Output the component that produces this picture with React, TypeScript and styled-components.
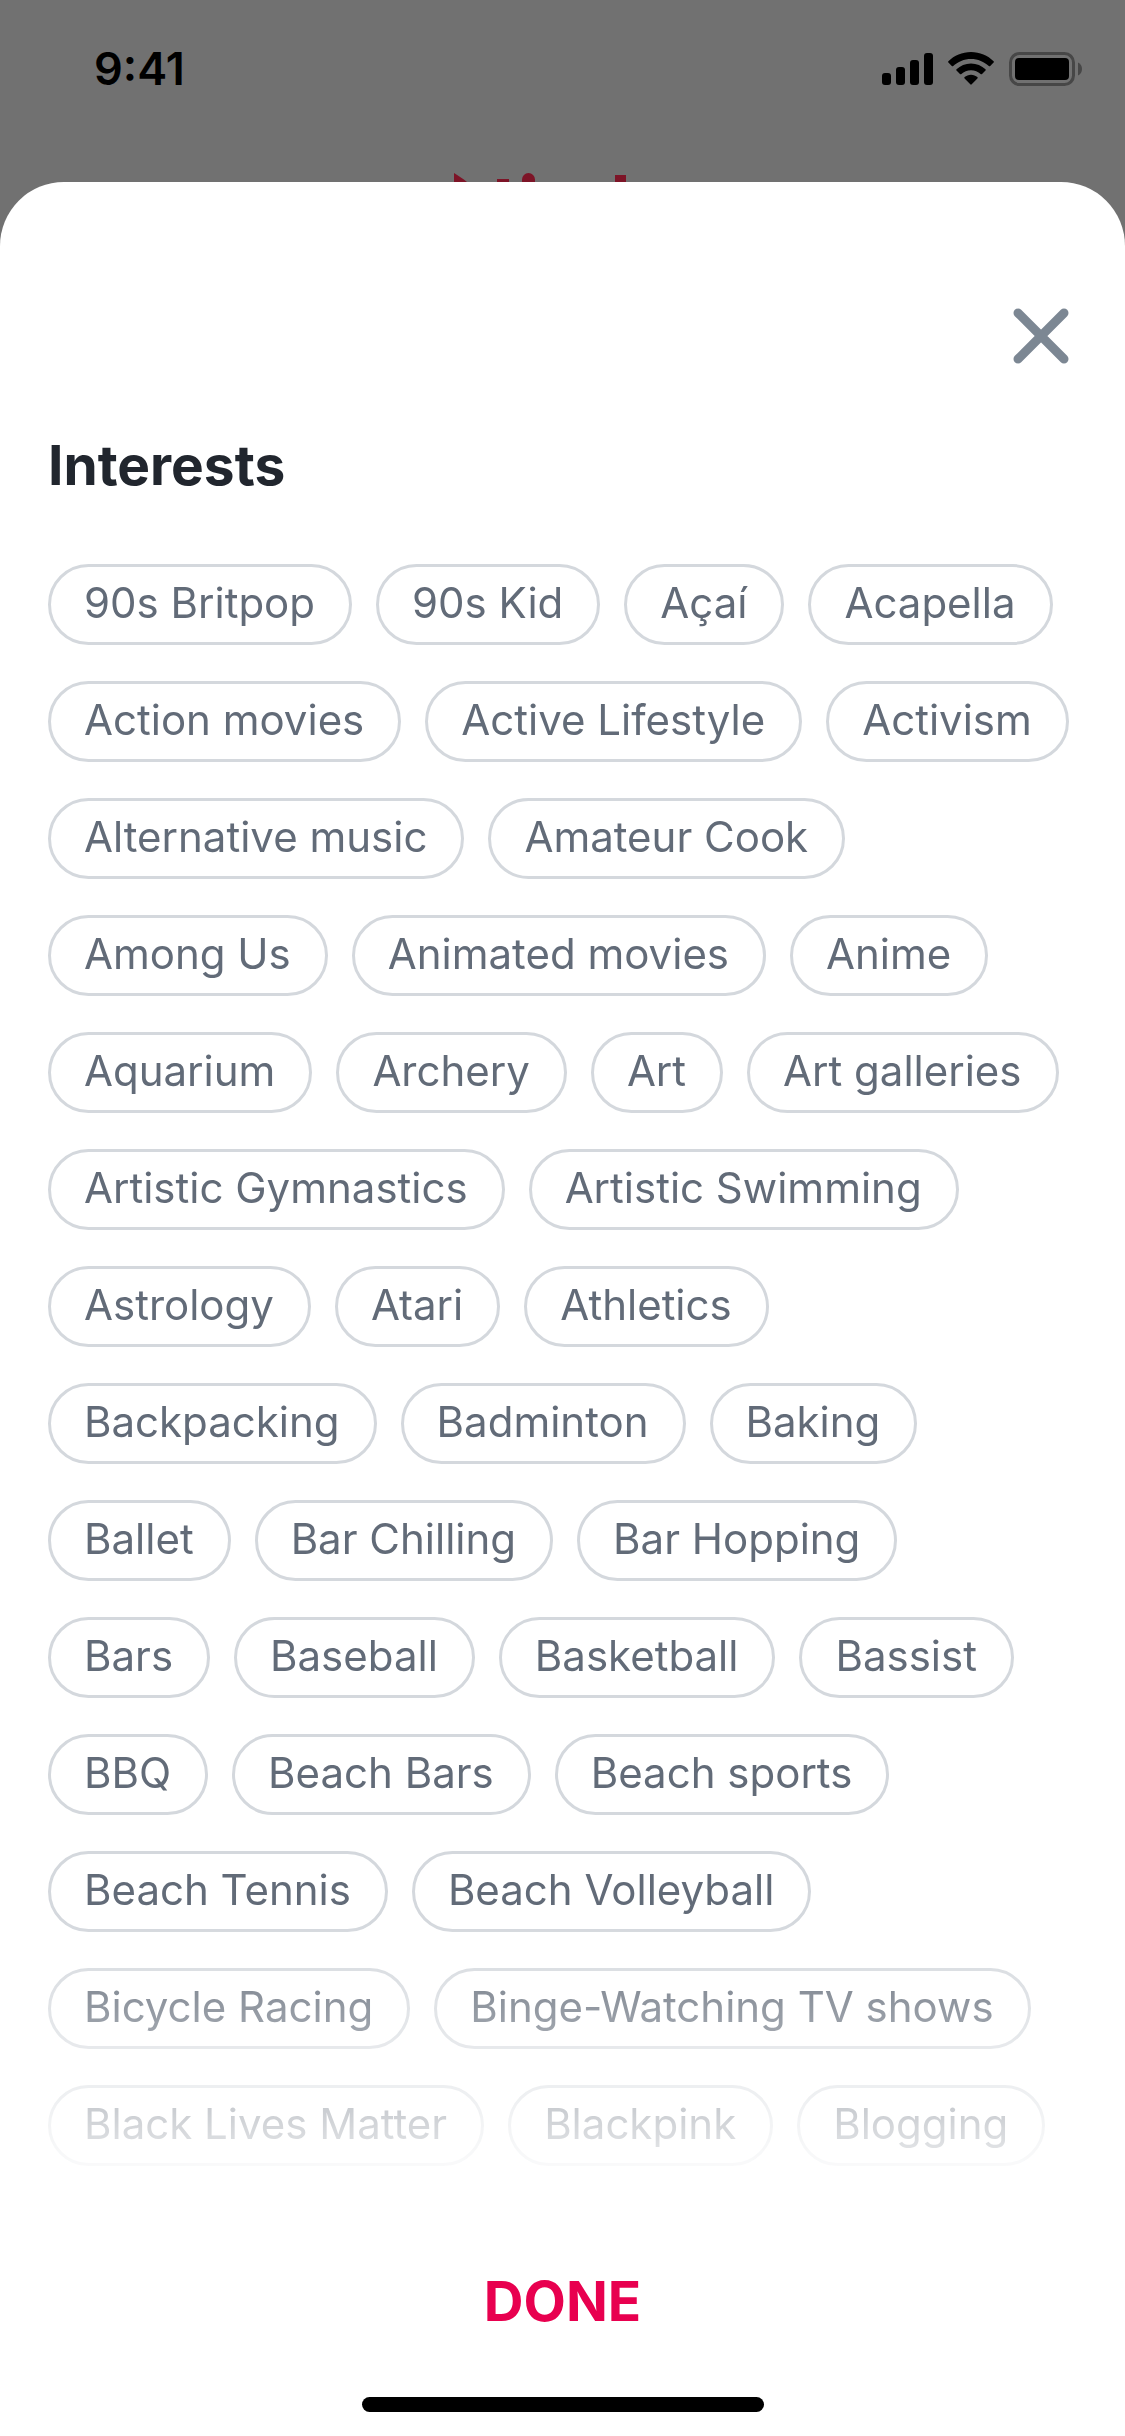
import React from "react";
import styled, { createGlobalStyle } from "styled-components";

const INTERESTS = [
  "90s Britpop",
  "90s Kid",
  "Açaí",
  "Acapella",
  "Action movies",
  "Active Lifestyle",
  "Activism",
  "Alternative music",
  "Amateur Cook",
  "Among Us",
  "Animated movies",
  "Anime",
  "Aquarium",
  "Archery",
  "Art",
  "Art galleries",
  "Artistic Gymnastics",
  "Artistic Swimming",
  "Astrology",
  "Atari",
  "Athletics",
  "Backpacking",
  "Badminton",
  "Baking",
  "Ballet",
  "Bar Chilling",
  "Bar Hopping",
  "Bars",
  "Baseball",
  "Basketball",
  "Bassist",
  "BBQ",
  "Beach Bars",
  "Beach sports",
  "Beach Tennis",
  "Beach Volleyball",
  "Bicycle Racing",
  "Binge-Watching TV shows",
  "Black Lives Matter",
  "Blackpink",
  "Blogging",
];

const GlobalStyle = createGlobalStyle`
  *, *::before, *::after {
    box-sizing: border-box;
  }

  body {
    margin: 0;
    background: #717171;
    font-family: Inter, "Liberation Sans", sans-serif;
  }
`;

const Screen = styled.div`
  display: flex;
  flex-direction: column;
  min-height: 100vh;
  background: #717171;
`;

const Backdrop = styled.header`
  display: flex;
  flex-direction: column;
`;

const StatusBar = styled.div`
  display: flex;
  align-items: center;
  justify-content: space-between;
  height: 138px;
  padding: 0 43px 0 94px;
  color: #000;
`;

const Clock = styled.time`
  font-size: 45px;
  font-weight: 600;
  line-height: 54px;
`;

const StatusIcons = styled.div`
  display: flex;
  align-items: center;
  gap: 15px;

  svg {
    display: block;
  }
`;

const BrandBar = styled.div`
  display: flex;
  align-items: flex-end;
  justify-content: center;
  height: 44px;
  color: #7d1427;

  svg {
    display: block;
  }
`;

const Sheet = styled.main`
  display: flex;
  flex: 1;
  flex-direction: column;
  padding: 126px 0 24px;
  border-radius: 64px 64px 0 0;
  background: #fff;
`;

const CloseButton = styled.button`
  display: flex;
  align-self: flex-end;
  margin: 0 56px 0 0;
  padding: 0;
  border: 0;
  background: none;
  color: #7c8793;
  cursor: pointer;
`;

const Title = styled.h1`
  margin: 68px 48px 66px;
  color: #21262e;
  font-size: 55px;
  font-weight: 700;
  line-height: 66px;
`;

const ChipList = styled.ul`
  display: flex;
  flex: 1;
  flex-wrap: wrap;
  align-content: flex-start;
  gap: 36px 24px;
  margin: 0;
  padding: 0 48px 39px;
  list-style: none;
  mask-image: linear-gradient(to bottom, #000 calc(100% - 285px), transparent);
`;

const Chip = styled.button`
  display: block;
  padding: 11px 34px 14px 33px;
  border: 3px solid #d4d8dd;
  border-radius: 41px;
  background: #fff;
  color: #626b78;
  font-family: inherit;
  font-size: 42px;
  font-weight: 400;
  line-height: 50px;
  white-space: nowrap;
  cursor: pointer;
`;

const DoneButton = styled.button`
  align-self: center;
  margin: 63px 0;
  padding: 0;
  border: 0;
  background: none;
  color: #e8004f;
  font-family: inherit;
  font-size: 55px;
  font-weight: 700;
  line-height: 66px;
  cursor: pointer;
`;

const HomeIndicator = styled.div`
  align-self: center;
  width: 402px;
  max-width: 60%;
  height: 15px;
  border-radius: 8px;
  background: #000;
`;

function SignalIcon() {
  return (
    <svg width="51" height="34" viewBox="0 0 51 34" fill="currentColor" aria-hidden="true">
      <rect x="0" y="21" width="9" height="12" rx="3" />
      <rect x="14" y="15" width="9" height="18" rx="3" />
      <rect x="28" y="8" width="9" height="25" rx="3" />
      <rect x="42" y="1" width="9" height="32" rx="3" />
    </svg>
  );
}

function WifiIcon() {
  return (
    <svg width="46" height="34" viewBox="0 0 46 34" fill="currentColor" aria-hidden="true">
      <path d="M23 0C31.800 0 39.800 3.500 45.600 9.200Q46.200 9.900 45.600 10.500L42.200 14Q41.500 14.500 40.800 14C36.200 9.600 29.900 6.900 23 6.900S9.800 9.600 5.200 14Q4.500 14.500 3.800 14L.4 10.500Q-.2 9.900 .4 9.200C6.200 3.500 14.200 0 23 0Z" />
      <path d="M23 11.400C28.600 11.400 33.700 13.600 37.500 17.200Q38.100 17.900 37.500 18.500L34 22Q33.300 22.600 32.600 22C30.100 19.700 26.700 18.300 23 18.300S15.900 19.700 13.400 22Q12.700 22.600 12 22L8.500 18.500Q7.900 17.900 8.500 17.200C12.300 13.600 17.400 11.400 23 11.400Z" />
      <path d="M23 22.700C25.500 22.700 27.700 23.600 29.400 25.100Q30.100 25.800 29.400 26.500L23.700 32.300Q23 33 22.300 32.300L16.600 26.500Q15.900 25.800 16.600 25.100C18.300 23.600 20.500 22.700 23 22.700Z" />
    </svg>
  );
}

function BatteryIcon() {
  return (
    <svg width="73" height="34" viewBox="0 0 73 34" aria-hidden="true">
      <rect x="1.500" y="1.500" width="63" height="31" rx="9" fill="none" stroke="#474747" strokeWidth="3" />
      <rect x="6" y="6" width="54" height="22" rx="4" fill="#000" />
      <path d="M69 10.500C71.400 11.500 73 14 73 17S71.400 22.500 69 23.500Z" fill="#474747" />
    </svg>
  );
}

/* Upper edge of the wordmark, above the sheet */
function BrandMark() {
  return (
    <svg width="217" height="9" viewBox="0 0 217 9" fill="currentColor" aria-hidden="true">
      <path d="M0 0C4 2.500 9 5.500 13 9H0Z" />
      <rect x="43" y="6" width="12" height="3" />
      <path d="M68 9V6.500A6.500 6.500 0 0 1 81 6.500V9Z" />
      <rect x="161" y="2" width="11" height="7" />
    </svg>
  );
}

function CloseIcon() {
  return (
    <svg width="56" height="56" viewBox="0 0 56 56" aria-hidden="true">
      <path d="M5 5L51 51M51 5L5 51" fill="none" stroke="currentColor" strokeWidth="9" strokeLinecap="round" />
    </svg>
  );
}

export default function App() {
  return (
    <>
      <GlobalStyle />
      <Screen>
        <Backdrop>
          <StatusBar>
            <Clock>9:41</Clock>
            <StatusIcons>
              <SignalIcon />
              <WifiIcon />
              <BatteryIcon />
            </StatusIcons>
          </StatusBar>
          <BrandBar>
            <BrandMark />
          </BrandBar>
        </Backdrop>
        <Sheet>
          <CloseButton type="button" aria-label="Close">
            <CloseIcon />
          </CloseButton>
          <Title>Interests</Title>
          <ChipList>
            {INTERESTS.map((interest) => (
              <li key={interest}>
                <Chip type="button">{interest}</Chip>
              </li>
            ))}
          </ChipList>
          <DoneButton type="button">DONE</DoneButton>
          <HomeIndicator />
        </Sheet>
      </Screen>
    </>
  );
}
